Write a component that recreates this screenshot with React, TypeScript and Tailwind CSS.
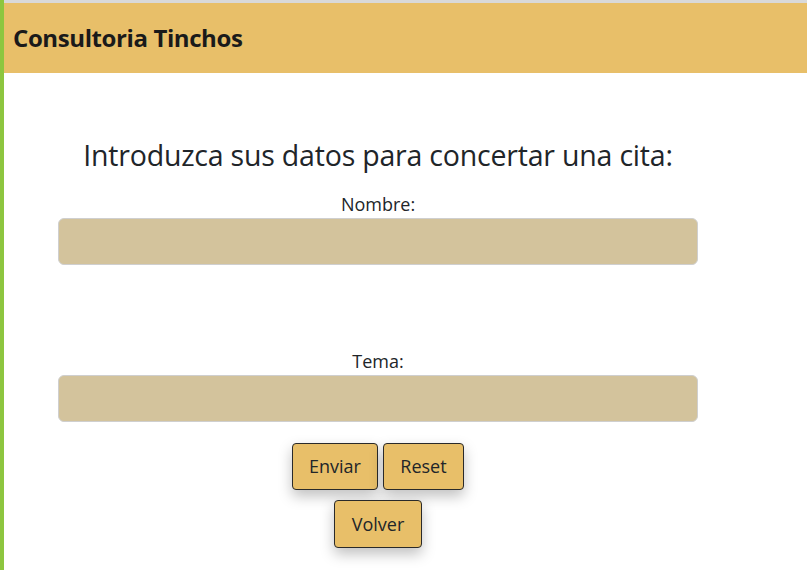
export default function App() {
  return (
    <div className="min-h-[570px] border-l-4 border-[#8dc63f] bg-white font-['Open_Sans',sans-serif] text-[#212529]">
      <header className="border-t-[3px] border-[#d9d9d9] bg-[#e8bf69] px-[9px] h-[73px] flex items-center">
        <h1 className="text-[24px] font-bold text-[#1a1a1a] tracking-[-0.4px]">Consultoria Tinchos</h1>
      </header>

      <main className="pt-[64px]">
        <form className="ml-[54px] w-[640px] flex flex-col items-center">
          <h2 className="text-[28.5px] leading-[36px] tracking-[-0.2px]">
            Introduzca sus datos para concertar una cita:
          </h2>
          <label className="mt-[19px] text-[18px] leading-[24px]">Nombre:</label>
          <input
            type="text"
            className="mt-[2px] h-[47px] w-full rounded-[6px] border border-[#cfcfcf] bg-[#d3c39c]"
          />
          <label className="mt-[84px] text-[18px] leading-[24px]">Tema:</label>
          <input
            type="text"
            className="mt-[2px] h-[47px] w-full rounded-[6px] border border-[#cfcfcf] bg-[#d3c39c]"
          />
          <div className="mt-[21px] flex gap-[5px]">
            <button
              type="button"
              className="h-[47px] w-[86px] rounded-[4px] border border-[#2a2a2a] bg-[#e8bf69] text-[18px] shadow-[0_6px_14px_rgba(0,0,0,0.25)]"
            >
              Enviar
            </button>
            <button
              type="reset"
              className="h-[47px] w-[81px] rounded-[4px] border border-[#2a2a2a] bg-[#e8bf69] text-[18px] shadow-[0_6px_14px_rgba(0,0,0,0.25)]"
            >
              Reset
            </button>
          </div>
          <button
            type="button"
            className="mt-[10px] h-[48px] w-[88px] rounded-[4px] border border-[#2a2a2a] bg-[#e8bf69] text-[18px] shadow-[0_6px_14px_rgba(0,0,0,0.25)]"
          >
            Volver
          </button>
        </form>
      </main>
    </div>
  );
}
